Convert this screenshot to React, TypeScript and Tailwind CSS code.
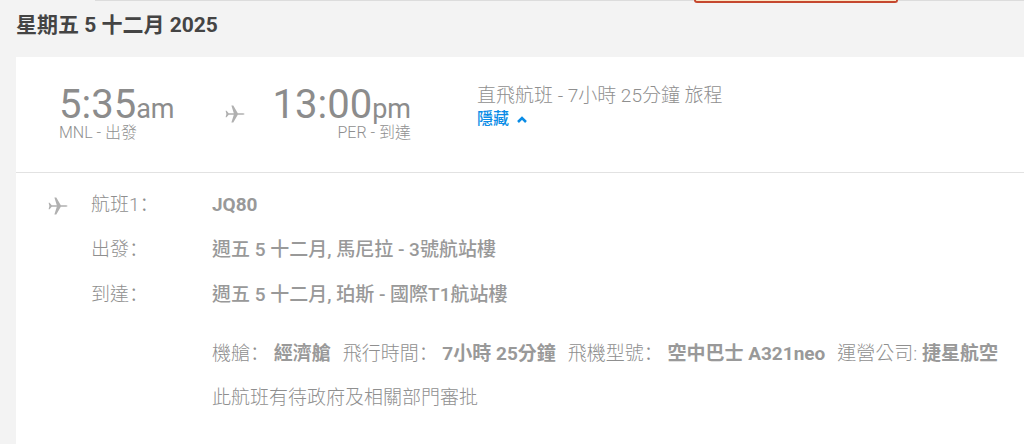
import type { ReactNode } from "react";

function Plane() {
  return (
    <svg viewBox="0 0 20 18" className="h-[18px] w-5 shrink-0 fill-[#b0b0b0]" aria-hidden="true">
      <path d="M0.6 5.8h1L3.7 8.2h5.1L6.4 0.6h1.9L12.8 8.2h4.5c1.3 0 2.3.4 2.3.8s-1 .8-2.3.8h-4.5L8.3 17.4H6.4L8.8 9.8H3.7L1.6 12.2H0.6L1.4 9z" />
    </svg>
  );
}

function Colon() {
  return <span className="leading-none font-['Noto_Sans_CJK_SC',sans-serif]">：</span>;
}

function Time({ clock, period, place, align }: { clock: string; period: string; place: string; align: string }) {
  return (
    <div className={align}>
      <p className="text-[40px] leading-[44px] text-[#8c8c8c]">
        {clock}
        <span className="text-[27px] leading-none">{period}</span>
      </p>
      <p className="text-base leading-3 font-light">{place}</p>
    </div>
  );
}

function Row({ label, children }: { label: ReactNode; children: ReactNode }) {
  return (
    <div className="flex h-[45px]">
      <dt className="w-[121px] shrink-0">
        {label}
        <Colon />
      </dt>
      <dd className="font-bold text-[#999]">{children}</dd>
    </div>
  );
}

function Detail({ label, value }: { label: string; value: string }) {
  return (
    <span>
      {label}
      <Colon /> <b className="font-bold text-[#999]">{value}</b>
    </span>
  );
}

export default function App() {
  return (
    <main className="relative flex min-h-screen flex-col bg-[#f3f3f3] pl-4 font-['Roboto','Noto_Sans_CJK_TC',sans-serif] text-[#999]">
      <div className="absolute top-0 right-0 left-[95px] h-px bg-[#dcdcdc]" />
      <div className="absolute top-0 left-[694px] h-[3px] w-[204px] rounded-b-md border-x-2 border-b-2 border-[#c5472f] bg-[#fbe6c4]" />
      <h2 className="pt-[11px] pb-[18px] text-[21px] leading-7 font-bold text-[#444]">星期五 5 十二月 2025</h2>
      <section className="flex-1 bg-white">
        <div className="flex h-[116px] border-b border-[#e2e2e2] pt-[26px] pl-[43px] text-[#8f8f8f]">
          <Time clock="5:35" period="am" place="MNL - 出發" align="w-[166px]" />
          <div className="w-[49px] pt-[22px]">
            <Plane />
          </div>
          <Time clock="13:00" period="pm" place="PER - 到達" align="flex w-[137px] flex-col items-end" />
          <div className="pl-[66px]">
            <p className="pt-px text-[19px] leading-6 font-light">直飛航班 - 7小時 25分鐘 旅程</p>
            <button type="button" className="flex items-center gap-2 text-base leading-[22px] font-medium text-[#0a8ce6]">
              隱藏
              <svg viewBox="0 0 10 8" className="h-2 w-[10px] fill-none stroke-current stroke-[2.5]" aria-hidden="true">
                <path d="M1 7L5 3L9 7" />
              </svg>
            </button>
          </div>
        </div>
        <div className="flex pt-[18px] pl-8 text-[19px] leading-7 font-light text-[#8f8f8f]">
          <div className="w-[43px] shrink-0 pt-1.5">
            <Plane />
          </div>
          <div>
            <dl>
              <Row label="航班1">JQ80</Row>
              <Row label="出發"><span className="font-medium">週五 5 十二月, 馬尼拉 - 3號航站樓</span></Row>
              <Row label="到達"><span className="font-medium">週五 5 十二月, 珀斯 - 國際T1航站樓</span></Row>
            </dl>
            <div className="pt-[14px] pl-[121px]">
              <p className="flex gap-3 whitespace-nowrap">
                <Detail label="機艙" value="經濟艙" />
                <Detail label="飛行時間" value="7小時 25分鐘" />
                <Detail label="飛機型號" value="空中巴士 A321neo" />
                <span>
                  運營公司: <b className="font-bold text-[#999]">捷星航空</b>
                </span>
              </p>
              <p className="pt-4">此航班有待政府及相關部門審批</p>
            </div>
          </div>
        </div>
      </section>
    </main>
  );
}
